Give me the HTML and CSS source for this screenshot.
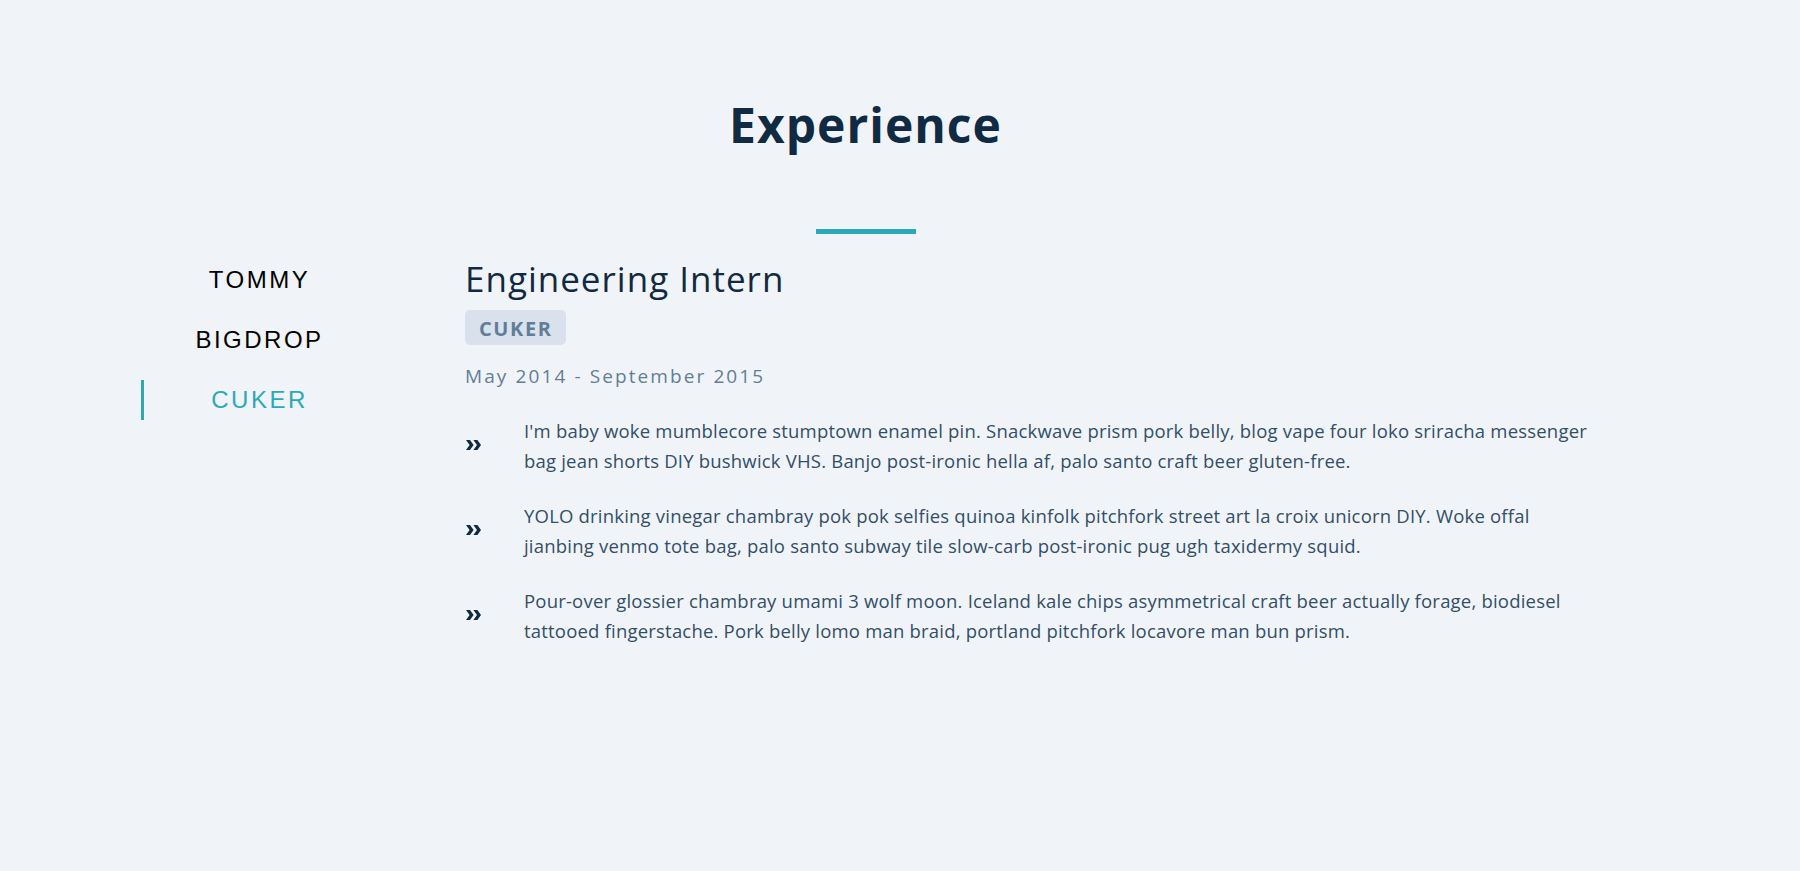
FILE: index.html
```html
<!DOCTYPE html>
<html lang="en">
<head>
<meta charset="utf-8">
<title>Experience</title>
<link rel="stylesheet" href="styles.css">
</head>
<body>
<section class="experience">
  <h2 class="section-title">Experience</h2>
  <div class="title-bar"></div>
  <div class="exp-row">
    <ul class="company-nav">
      <li class="company-item">TOMMY</li>
      <li class="company-item">BIGDROP</li>
      <li class="company-item active">CUKER</li>
    </ul>
    <div class="job">
      <h3 class="job-title">Engineering Intern</h3>
      <span class="job-company">CUKER</span>
      <p class="job-range">May 2014 - September 2015</p>
      <ul class="job-points">
        <li class="job-point">
          <span class="bullet"><svg viewBox="0 0 15 10" width="15" height="10"><path d="M0 0 H4 L7.6 5 L4 10 H0 L3.6 5 Z M7.4 0 H11.4 L15 5 L11.4 10 H7.4 L11 5 Z" fill="#102a43"/></svg></span>
          <p class="point-text">I'm baby woke mumblecore stumptown enamel pin. Snackwave prism pork belly, blog vape four loko sriracha messenger bag jean shorts DIY bushwick VHS. Banjo post-ironic hella af, palo santo craft beer gluten-free.</p>
        </li>
        <li class="job-point">
          <span class="bullet"><svg viewBox="0 0 15 10" width="15" height="10"><path d="M0 0 H4 L7.6 5 L4 10 H0 L3.6 5 Z M7.4 0 H11.4 L15 5 L11.4 10 H7.4 L11 5 Z" fill="#102a43"/></svg></span>
          <p class="point-text">YOLO drinking vinegar chambray pok pok selfies quinoa kinfolk pitchfork street art la croix unicorn DIY. Woke offal jianbing venmo tote bag, palo santo subway tile slow-carb post-ironic pug ugh taxidermy squid.</p>
        </li>
        <li class="job-point">
          <span class="bullet"><svg viewBox="0 0 15 10" width="15" height="10"><path d="M0 0 H4 L7.6 5 L4 10 H0 L3.6 5 Z M7.4 0 H11.4 L15 5 L11.4 10 H7.4 L11 5 Z" fill="#102a43"/></svg></span>
          <p class="point-text">Pour-over glossier chambray umami 3 wolf moon. Iceland kale chips asymmetrical craft beer actually forage, biodiesel tattooed fingerstache. Pork belly lomo man braid, portland pitchfork locavore man bun prism.</p>
        </li>
      </ul>
    </div>
  </div>
</section>
</body>
</html>
```

FILE: styles.css
```css
html, body {
  margin: 0;
  padding: 0;
  background: #f0f4f8;
}
body {
  font-family: "Open Sans", "Noto Sans", sans-serif;
  color: #334e68;
}
.experience {
  width: 1449px;
  margin-left: 141px;
  padding-top: 96px;
}
.section-title {
  margin: 0;
  text-align: center;
  font-size: 48px;
  line-height: 58px;
  font-weight: 700;
  color: #102a43;
  letter-spacing: 1px;
}
.title-bar {
  width: 100px;
  height: 5px;
  background: #2aaab8;
  margin: 75px auto 23px;
}
.exp-row {
  display: flex;
  gap: 90px;
}
.company-nav {
  list-style: none;
  margin: 3px 0 0;
  padding: 0;
  width: 234px;
  flex: none;
  display: flex;
  flex-direction: column;
  gap: 20px;
}
.company-item {
  height: 40px;
  line-height: 40px;
  text-align: center;
  font-family: "Liberation Sans", Arial, sans-serif;
  font-size: 24px;
  letter-spacing: 2.5px;
  color: #000;
  border-left: 3px solid transparent;
}
.company-item.active {
  color: #2aaab8;
  border-left-color: #2aaab8;
}
.job {
  flex: 1;
  min-width: 0;
  margin-right: -12px;
}
.job-title {
  margin: 0;
  padding-top: 1px;
  font-size: 35px;
  line-height: 42px;
  font-weight: 400;
  letter-spacing: 1px;
  color: #102a43;
}
.job-company {
  display: inline-block;
  box-sizing: border-box;
  margin-top: 10px;
  height: 35px;
  padding: 2px 13px 0 14px;
  line-height: 33px;
  font-size: 20px;
  font-weight: 700;
  letter-spacing: 1.6px;
  color: #627d98;
  background: #d9e2ec;
  border-radius: 5px;
  vertical-align: top;
}
.job-range {
  margin: 18px 0 0;
  font-size: 19px;
  line-height: 26px;
  letter-spacing: 2.1px;
  color: #627d98;
}
.job-points {
  list-style: none;
  margin: 27px 0 0;
  padding: 0;
}
.job-point {
  display: flex;
  align-items: center;
  margin-bottom: 25px;
}
.bullet {
  width: 59px;
  flex: none;
  display: flex;
  align-items: center;
  padding-left: 1px;
  box-sizing: border-box;
  margin-top: -2px;
}
.bullet svg {
  display: block;
}
.point-text {
  margin: 0;
  font-size: 18.5px;
  line-height: 30px;
  letter-spacing: 0.2px;
  color: #334e68;
}
```
